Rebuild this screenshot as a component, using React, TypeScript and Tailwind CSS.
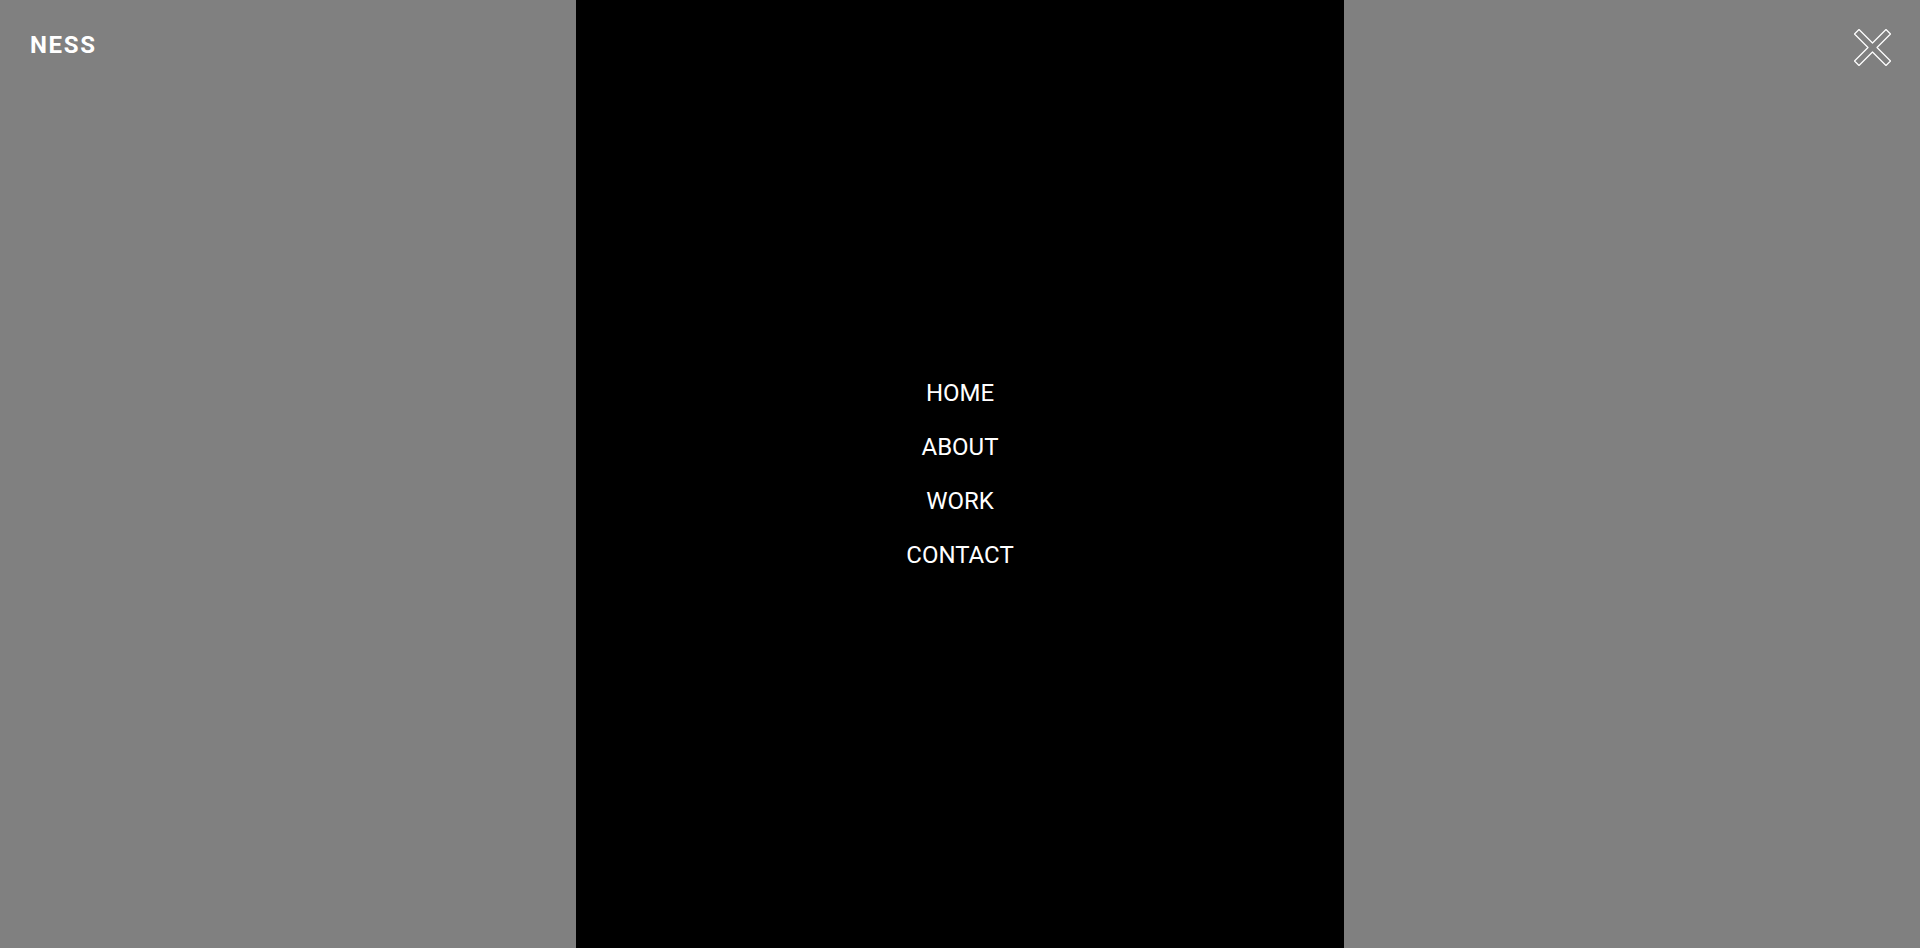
export default function App() {
  const links = ["HOME", "ABOUT", "WORK", "CONTACT"];

  return (
    <div className="relative flex h-screen w-full justify-center bg-[#808080] font-['Roboto',sans-serif]">
      {/* Center menu panel */}
      <nav className="flex h-full w-[768px] flex-col items-center justify-center gap-5 bg-black">
        {links.map((l) => (
          <a key={l} href="#" className="text-[24px] leading-[34px] text-white">
            {l}
          </a>
        ))}
      </nav>

      {/* Logo */}
      <div className="absolute left-[30px] top-[33px] text-[24px] font-bold leading-[24px] tracking-[0.07em] text-white">
        NESS
      </div>

      {/* Close button */}
      <button className="absolute right-[29px] top-[29px]">
        <svg width="37" height="37" viewBox="-0.5 -0.5 37 37" fill="none">
          <polygon
            points="4.5,0 18,13.5 31.5,0 36,4.5 22.5,18 36,31.5 31.5,36 18,22.5 4.5,36 0,31.5 13.5,18 0,4.5"
            stroke="white"
            strokeWidth="1.2"
            strokeLinejoin="round"
          />
        </svg>
      </button>
    </div>
  );
}
